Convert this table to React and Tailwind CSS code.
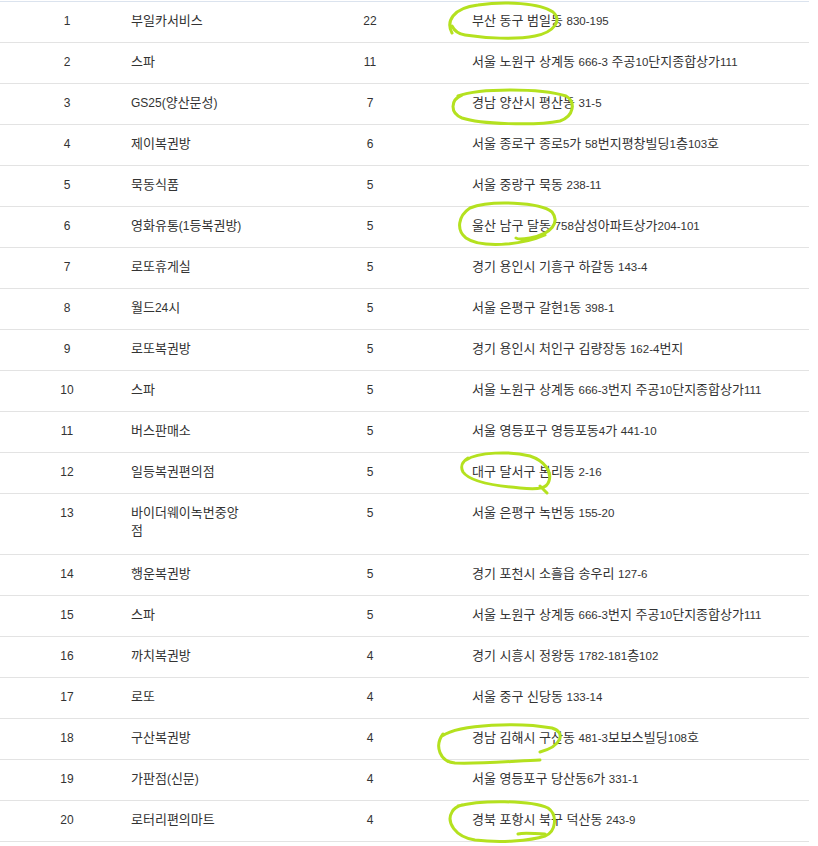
const rows = [
  [1, "부일카서비스", 22, "부산 동구 범일동 830-195"],
  [2, "스파", 11, "서울 노원구 상계동 666-3 주공10단지종합상가111"],
  [3, "GS25(양산문성)", 7, "경남 양산시 평산동 31-5"],
  [4, "제이복권방", 6, "서울 종로구 종로5가 58번지평창빌딩1층103호"],
  [5, "묵동식품", 5, "서울 중랑구 묵동 238-11"],
  [6, "영화유통(1등복권방)", 5, "울산 남구 달동 758삼성아파트상가204-101"],
  [7, "로또휴게실", 5, "경기 용인시 기흥구 하갈동 143-4"],
  [8, "월드24시", 5, "서울 은평구 갈현1동 398-1"],
  [9, "로또복권방", 5, "경기 용인시 처인구 김량장동 162-4번지"],
  [10, "스파", 5, "서울 노원구 상계동 666-3번지 주공10단지종합상가111"],
  [11, "버스판매소", 5, "서울 영등포구 영등포동4가 441-10"],
  [12, "일등복권편의점", 5, "대구 달서구 본리동 2-16"],
  [13, "바이더웨이녹번중앙점", 5, "서울 은평구 녹번동 155-20"],
  [14, "행운복권방", 5, "경기 포천시 소흘읍 송우리 127-6"],
  [15, "스파", 5, "서울 노원구 상계동 666-3번지 주공10단지종합상가111"],
  [16, "까치복권방", 4, "경기 시흥시 정왕동 1782-181층102"],
  [17, "로또", 4, "서울 중구 신당동 133-14"],
  [18, "구산복권방", 4, "경남 김해시 구산동 481-3보보스빌딩108호"],
  [19, "가판점(신문)", 4, "서울 영등포구 당산동6가 331-1"],
  [20, "로터리편의마트", 4, "경북 포항시 북구 덕산동 243-9"],
];

// hand drawn marker loops over some addresses
const loops = [
  "M 452 33 C 446 22, 452 8, 478 5 C 505 1, 540 3, 553 12 C 562 20, 555 32, 535 36 C 515 40, 485 38, 465 35 C 458 34, 454 30, 452 26",
  "M 458 96 C 480 88, 540 88, 566 96 C 576 102, 574 116, 560 121 C 535 126, 480 124, 462 118 C 450 113, 450 100, 462 95",
  "M 470 208 C 490 200, 540 202, 552 212 C 560 222, 552 234, 530 238 C 524 239, 518 240, 516 238 M 545 235 C 520 246, 480 248, 466 238 C 456 230, 458 216, 470 208",
  "M 466 460 C 478 452, 510 451, 530 456 C 545 461, 552 472, 549 481 C 547 488, 540 490, 520 488 C 495 486, 470 482, 463 472 C 460 466, 462 462, 468 458 M 540 486 C 543 489, 546 492, 547 493",
  "M 442 736 C 460 724, 520 722, 552 728 C 566 732, 562 746, 540 752 M 443 734 C 434 746, 440 762, 455 763 C 480 764, 515 761, 540 760",
  "M 458 806 C 480 800, 530 800, 548 808 C 558 815, 556 832, 545 836 C 530 841, 500 843, 475 840 C 455 837, 446 822, 452 812 C 454 808, 458 806, 462 805 M 545 834 C 535 834, 525 832, 518 834",
];

// latin / digit runs get a smaller size than hangul
function Txt({ text, small }) {
  const parts = String(text).split(/([0-9A-Za-z()\-]+)/);
  return (
    <>
      {parts.map((p, i) =>
        /^[0-9A-Za-z()\-]+$/.test(p) ? (
          <span key={i} className={small ? "text-[11.5px]" : "text-[12px]"}>
            {p}
          </span>
        ) : (
          <span key={i}>{p}</span>
        )
      )}
    </>
  );
}

export default function App() {
  return (
    <div
      className="relative w-[818px] h-[846px] bg-white text-[13px] leading-[18px] text-[#333]"
      style={{ fontFamily: '"Liberation Sans", "Noto Sans CJK KR", sans-serif' }}
    >
      <div className="w-[809px] pt-px">
        <div className="border-t border-[#dbe3ee]">
          {rows.map(([rank, name, count, addr]) => (
            <div
              key={rank}
              className={
                "flex items-start pt-[10px] border-b border-[#e3e3e3] " +
                (rank === 13 ? "h-[61px]" : "h-[41px]")
              }
            >
              <div className="w-[131px] pl-[3px] text-center text-[12px]">{rank}</div>
              <div className="w-[179px]">
                <div className="max-w-[118px] break-all">
                  <Txt text={name} />
                </div>
              </div>
              <div className="w-[120px] text-center text-[12px]">{count}</div>
              <div className="flex-1 pl-[42px] whitespace-nowrap">
                <Txt text={addr} small />
              </div>
            </div>
          ))}
        </div>
      </div>

      {/* marker */}
      <svg
        className="absolute inset-0 pointer-events-none"
        width="818"
        height="846"
        viewBox="0 0 818 846"
        fill="none"
      >
        {loops.map((d, i) => (
          <path
            key={i}
            d={d}
            stroke="#b4e11f"
            strokeWidth="3"
            strokeLinecap="round"
            strokeLinejoin="round"
          />
        ))}
      </svg>
    </div>
  );
}
